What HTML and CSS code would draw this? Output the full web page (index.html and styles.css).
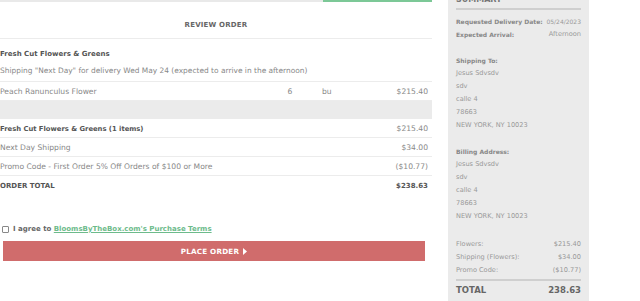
FILE: index.html
```
<!DOCTYPE html>
<html>
<head>
    <title>Review Order</title>
    <link rel="stylesheet" href="styles.css">
</head>
<body>
<div class="page">
    <div class="main">
        <div class="steps">
            <div class="step-active"></div>
        </div>
        <div class="review-title">REVIEW ORDER</div>

        <div class="group">
            <div class="group-name">Fresh Cut Flowers &amp; Greens</div>
            <div class="group-note">Shipping "Next Day" for delivery Wed May 24 (expected to arrive in the afternoon)</div>
        </div>

        <div class="item-row">
            <span>Peach Ranunculus Flower</span>
            <span class="qty">6</span>
            <span class="unit">bu</span>
            <span class="price">$215.40</span>
        </div>
        <div class="band"></div>

        <div class="sum-row strong">
            <span>Fresh Cut Flowers &amp; Greens (1 items)</span>
            <span class="light">$215.40</span>
        </div>
        <div class="sum-row">
            <span>Next Day Shipping</span>
            <span>$34.00</span>
        </div>
        <div class="sum-row">
            <span>Promo Code - First Order 5% Off Orders of $100 or More</span>
            <span>($10.77)</span>
        </div>
        <div class="sum-row total">
            <span>ORDER TOTAL</span>
            <span>$238.63</span>
        </div>

        <label class="agree">
            <input type="checkbox">
            <span>I agree to <a href="#">BloomsByTheBox.com's Purchase Terms</a></span>
        </label>
        <button class="place-order">PLACE ORDER
            <svg width="4" height="7" viewBox="0 0 4 7"><path d="M0 0 L4 3.5 L0 7 Z" fill="#fff"/></svg>
        </button>
    </div>

    <div class="sidebar">
        <h2>SUMMARY</h2>
        <div class="line"><b>Requested Delivery Date:</b><span class="date">05/24/2023</span></div>
        <div class="line"><b>Expected Arrival:</b><span>Afternoon</span></div>

        <div class="block">
            <b>Shipping To:</b>
            <div>Jesus Sdvsdv</div>
            <div>sdv</div>
            <div>calle 4</div>
            <div>78663</div>
            <div>NEW YORK, NY 10023</div>
        </div>

        <div class="block">
            <b>Billing Address:</b>
            <div>Jesus Sdvsdv</div>
            <div>sdv</div>
            <div>calle 4</div>
            <div>78663</div>
            <div>NEW YORK, NY 10023</div>
        </div>

        <div class="block totals">
            <div class="line"><span>Flowers:</span><span>$215.40</span></div>
            <div class="line"><span>Shipping (Flowers):</span><span>$34.00</span></div>
            <div class="line"><span>Promo Code:</span><span>($10.77)</span></div>
        </div>
        <div class="grand"><span>TOTAL</span><span>238.63</span></div>
    </div>
</div>
</body>
</html>
```

FILE: styles.css
```
body {
    margin: 0;
    padding: 0;
    background-color: #fff;
    font-family: "DejaVu Sans", sans-serif;
    color: #777;
    overflow: hidden;
}

.page {
    display: flex;
    align-items: flex-start;
}

/* Left column: order review */
.main {
    width: 432px;
    font-size: 7.6px;
}

.steps {
    height: 2px;
    background-color: #e9e9e9;
    display: flex;
    justify-content: flex-end;
}

.step-active {
    width: 109px;
    background-color: #7cc897;
}

.review-title {
    height: 19px;
    padding-top: 17px;
    line-height: 12px;
    text-align: center;
    font-size: 7px;
    font-weight: bold;
    letter-spacing: 0.2px;
    color: #666;
    border-bottom: 1px solid #ececec;
}

.group {
    padding: 9px 0 4px;
    border-bottom: 1px solid #ececec;
}

.group-name {
    line-height: 12px;
    font-size: 7px;
    font-weight: bold;
    color: #555;
}

.group-note {
    margin-top: 5px;
    line-height: 12px;
    font-size: 7.45px;
    color: #888;
}

.item-row {
    display: grid;
    grid-template-columns: 1fr 30px 73px 50px;
    padding: 2px 4px 0 0;
    line-height: 16px;
    border-bottom: 1px solid #ececec;
    color: #888;
}

.item-row .qty {
    text-align: center;
}

.item-row .unit {
    padding-left: 17px;
}

.item-row .price {
    text-align: right;
}

.band {
    height: 18px;
    background-color: #ebebeb;
}

.sum-row {
    display: flex;
    justify-content: space-between;
    align-items: baseline;
    padding: 2px 4px 0 0;
    line-height: 16px;
    border-bottom: 1px solid #ececec;
    color: #888;
}

.sum-row.strong {
    font-size: 6.8px;
    font-weight: bold;
    color: #555;
}

.sum-row .light {
    font-size: 7.6px;
    font-weight: normal;
    color: #888;
}

.sum-row.total {
    border-bottom: none;
    font-size: 7px;
    font-weight: bold;
    color: #555;
}

.agree {
    display: flex;
    align-items: center;
    gap: 4px;
    margin: 29px 0 0 2px;
    line-height: 12px;
    font-size: 7px;
    font-weight: bold;
    color: #666;
}

.agree input {
    appearance: none;
    margin: 0;
    width: 7px;
    height: 7px;
    border: 1px solid #888;
    border-radius: 1px;
    background: #fff;
}

.agree a {
    color: #6dbb8b;
    text-decoration: underline;
}

.place-order {
    display: flex;
    align-items: center;
    justify-content: center;
    gap: 4px;
    width: 422px;
    height: 20px;
    margin: 6px 0 0 3px;
    padding: 0;
    border: none;
    background-color: #d06c6c;
    color: #fff;
    font-family: "DejaVu Sans", sans-serif;
    font-size: 7.2px;
    font-weight: bold;
    letter-spacing: 0.2px;
}

/* Right column: summary */
.sidebar {
    width: 125px;
    height: 301px;
    margin-left: 16px;
    padding: 0 8px;
    background-color: #ebebeb;
    font-size: 6.6px;
    color: #999;
    white-space: nowrap;
}

.sidebar h2 {
    margin: -6px 0 0;
    padding-bottom: 2px;
    line-height: 12px;
    font-size: 8px;
    font-weight: bold;
    color: #777;
    border-bottom: 2px solid #cfcfcf;
}

.sidebar .line {
    display: flex;
    justify-content: space-between;
    line-height: 13px;
}

.sidebar h2 + .line {
    margin-top: 5px;
}

.sidebar b {
    font-size: 6px;
    font-weight: bold;
    color: #888;
}

.sidebar .date {
    font-size: 6px;
}

.block {
    margin-top: 13px;
    line-height: 13px;
}

.block b {
    display: block;
}

.totals {
    margin-top: 15px;
    padding-bottom: 2px;
    border-bottom: 2px solid #cfcfcf;
}

.grand {
    display: flex;
    justify-content: space-between;
    margin-top: 1px;
    line-height: 16px;
    font-size: 8.5px;
    font-weight: bold;
    color: #666;
}
```
